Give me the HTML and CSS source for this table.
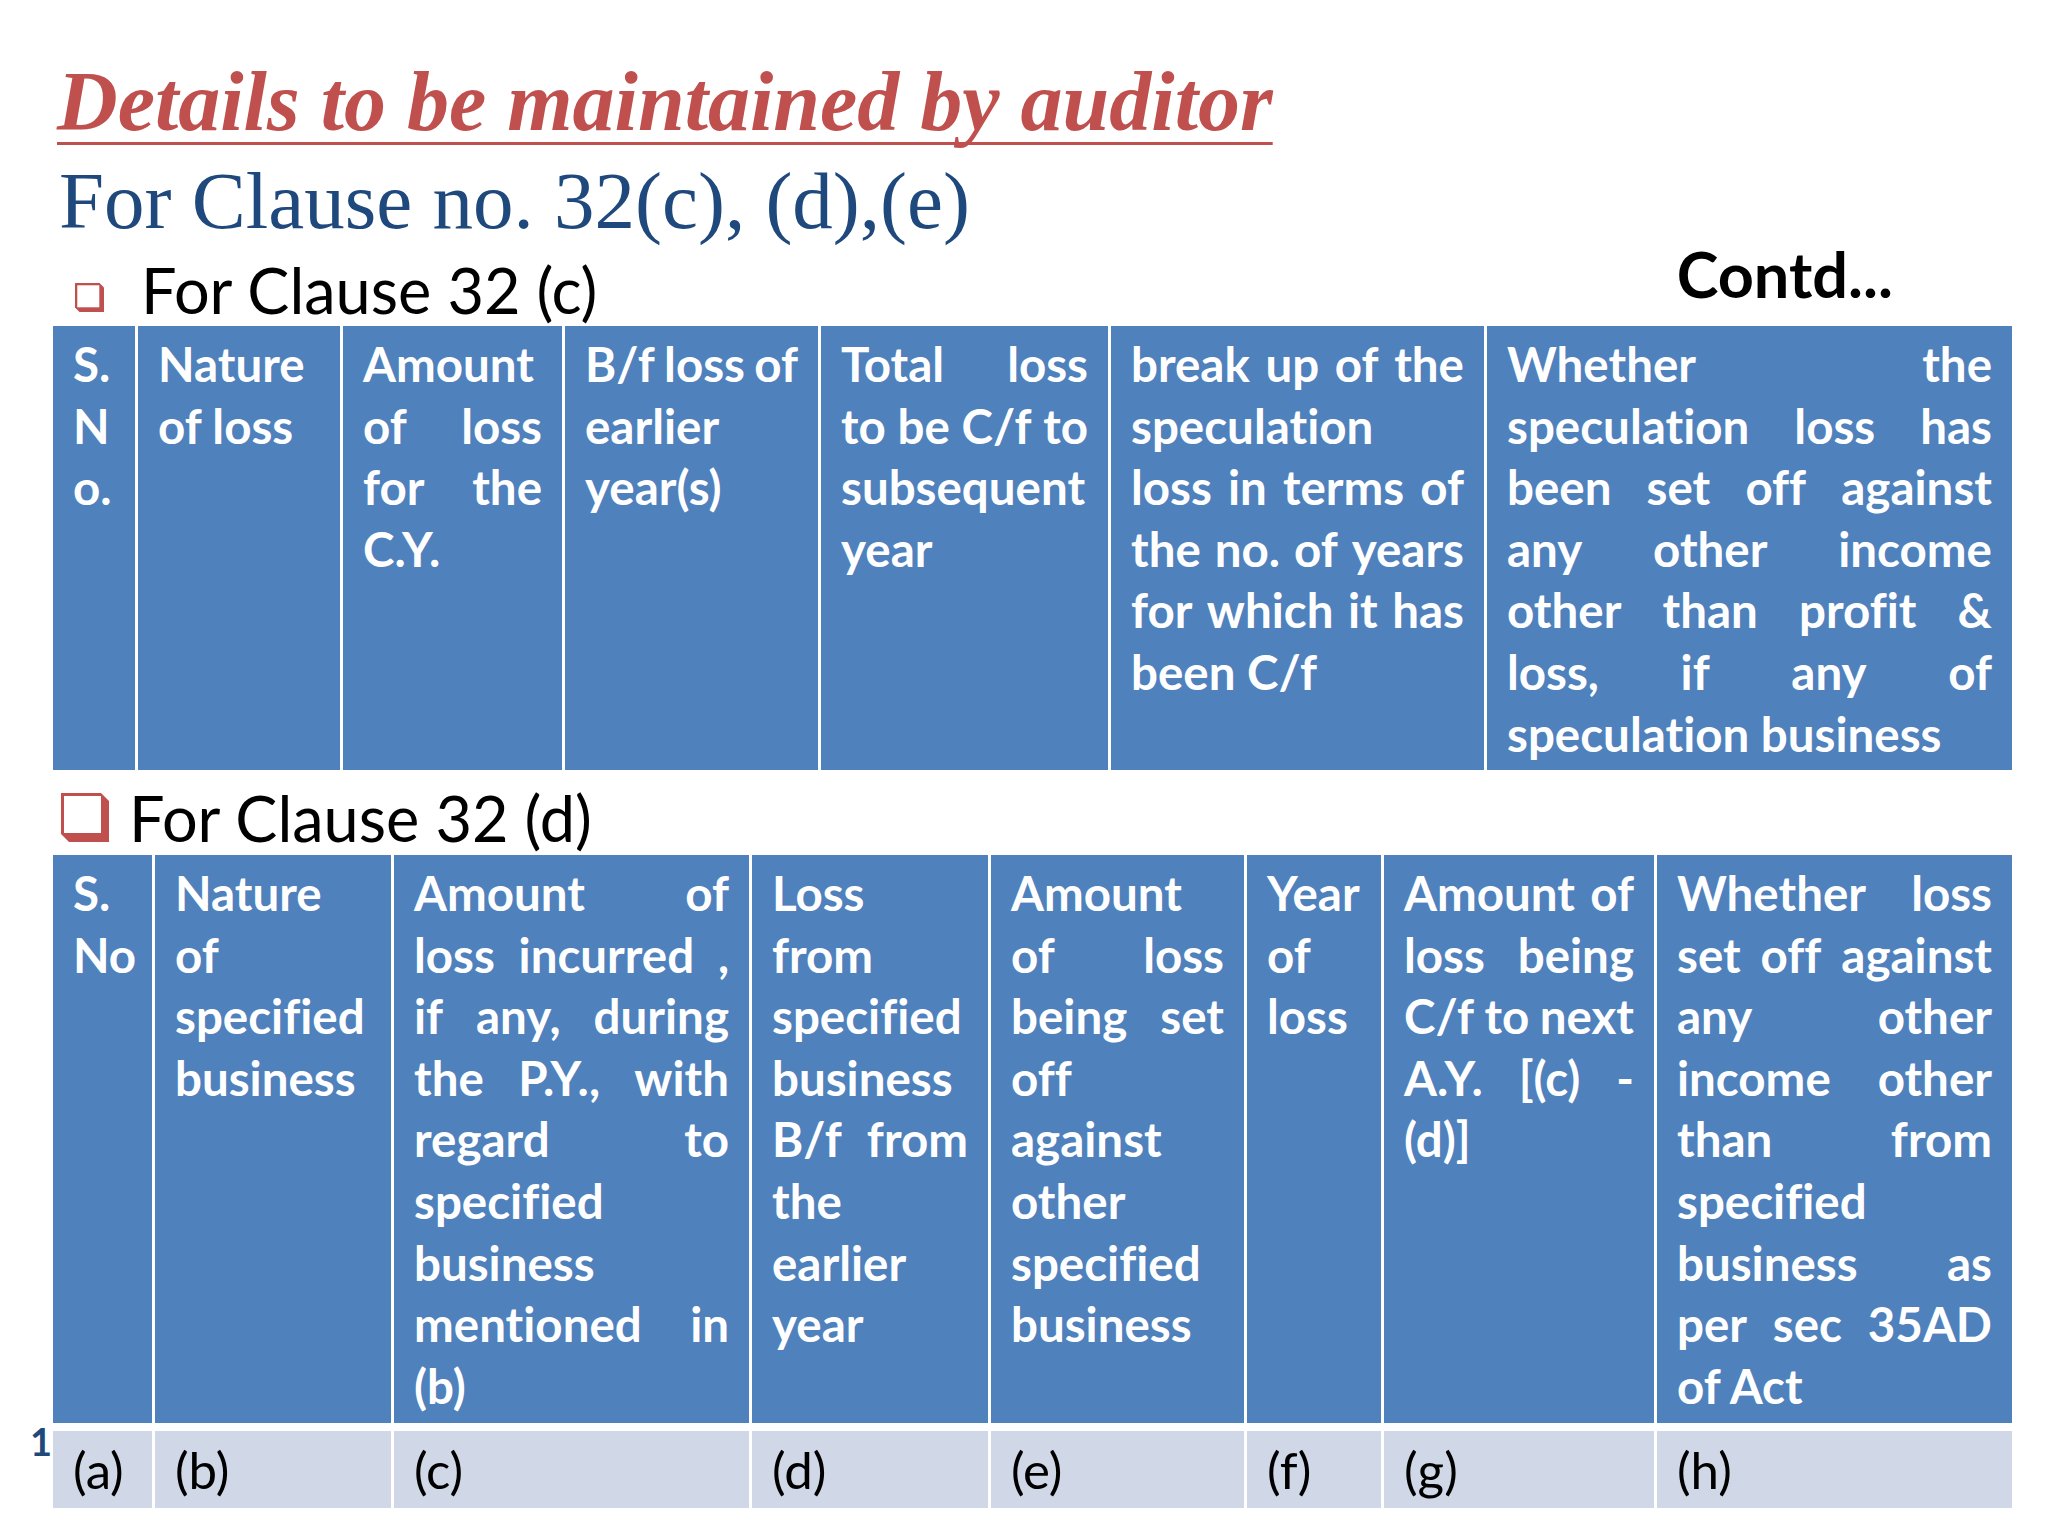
FILE: index.html
```html
<!DOCTYPE html>
<html lang="en">
<head>
<meta charset="utf-8">
<title>Details to be maintained by auditor</title>
<link rel="stylesheet" href="styles.css">
</head>
<body>
<div class="slide">
  <h1 class="title"><span>Details to be maintained by auditor</span></h1>
  <h2 class="subtitle">For Clause no. 32(c), (d),(e)</h2>

  <div class="clause-row">
    <svg class="bullet-s" viewBox="0 0 29 29" aria-hidden="true">
      <polygon points="0,0 24.5,0 29,4.5 29,29 4.5,29 0,24.5" fill="#C0504D"/>
      <rect x="2.3" y="2.3" width="22" height="22" fill="#fff"/>
    </svg>
    <div class="clause-text c-text">For Clause 32 (c)</div>
    <div class="contd">Contd...</div>
  </div>

  <div class="tbl tbl1">
    <div class="cell">
      <span class="ln">S.</span><span class="ln">N</span><span class="ln">o.</span>
    </div>
    <div class="cell">
      <span class="ln">Nature</span><span class="ln">of loss</span>
    </div>
    <div class="cell">
      <span class="ln">Amount</span>
      <span class="ln j"><span>of</span><span>loss</span></span>
      <span class="ln j"><span>for</span><span>the</span></span>
      <span class="ln">C.Y.</span>
    </div>
    <div class="cell">
      <span class="ln j"><span>B/f</span><span>loss</span><span>of</span></span>
      <span class="ln">earlier</span>
      <span class="ln">year(s)</span>
    </div>
    <div class="cell">
      <span class="ln j"><span>Total</span><span>loss</span></span>
      <span class="ln j"><span>to</span><span>be</span><span>C/f</span><span>to</span></span>
      <span class="ln">subsequent</span>
      <span class="ln">year</span>
    </div>
    <div class="cell">
      <span class="ln j"><span>break</span><span>up</span><span>of</span><span>the</span></span>
      <span class="ln">speculation</span>
      <span class="ln j"><span>loss</span><span>in</span><span>terms</span><span>of</span></span>
      <span class="ln j"><span>the</span><span>no.</span><span>of</span><span>years</span></span>
      <span class="ln j"><span>for</span><span>which</span><span>it</span><span>has</span></span>
      <span class="ln">been C/f</span>
    </div>
    <div class="cell">
      <span class="ln j"><span>Whether</span><span>the</span></span>
      <span class="ln j"><span>speculation</span><span>loss</span><span>has</span></span>
      <span class="ln j"><span>been</span><span>set</span><span>off</span><span>against</span></span>
      <span class="ln j"><span>any</span><span>other</span><span>income</span></span>
      <span class="ln j"><span>other</span><span>than</span><span>profit</span><span>&amp;</span></span>
      <span class="ln j"><span>loss,</span><span>if</span><span>any</span><span>of</span></span>
      <span class="ln">speculation business</span>
    </div>
  </div>

  <div class="clause-row clause-row-d">
    <svg class="bullet-l" viewBox="0 0 48 49" aria-hidden="true">
      <polygon points="0,0 40,0 48,8 48,49 8,49 0,41" fill="#C0504D"/>
      <rect x="3" y="3" width="37" height="37" fill="#fff"/>
    </svg>
    <div class="clause-text d-text">For Clause 32 (d)</div>
  </div>

  <div class="tbl tbl2">
    <div class="cell">
      <span class="ln">S.</span><span class="ln">No</span>
    </div>
    <div class="cell">
      <span class="ln">Nature</span><span class="ln">of</span><span class="ln">specified</span><span class="ln">business</span>
    </div>
    <div class="cell">
      <span class="ln j"><span>Amount</span><span>of</span></span>
      <span class="ln j"><span>loss</span><span>incurred</span><span>,</span></span>
      <span class="ln j"><span>if</span><span>any,</span><span>during</span></span>
      <span class="ln j"><span>the</span><span>P.Y.,</span><span>with</span></span>
      <span class="ln j"><span>regard</span><span>to</span></span>
      <span class="ln">specified</span>
      <span class="ln">business</span>
      <span class="ln j"><span>mentioned</span><span>in</span></span>
      <span class="ln">(b)</span>
    </div>
    <div class="cell">
      <span class="ln">Loss</span>
      <span class="ln">from</span>
      <span class="ln">specified</span>
      <span class="ln">business</span>
      <span class="ln j"><span>B/f</span><span>from</span></span>
      <span class="ln">the</span>
      <span class="ln">earlier</span>
      <span class="ln">year</span>
    </div>
    <div class="cell">
      <span class="ln">Amount</span>
      <span class="ln j"><span>of</span><span>loss</span></span>
      <span class="ln j"><span>being</span><span>set</span></span>
      <span class="ln">off</span>
      <span class="ln">against</span>
      <span class="ln">other</span>
      <span class="ln">specified</span>
      <span class="ln">business</span>
    </div>
    <div class="cell">
      <span class="ln">Year</span><span class="ln">of</span><span class="ln">loss</span>
    </div>
    <div class="cell">
      <span class="ln j"><span>Amount</span><span>of</span></span>
      <span class="ln j"><span>loss</span><span>being</span></span>
      <span class="ln j"><span>C/f</span><span>to</span><span>next</span></span>
      <span class="ln j"><span>A.Y.</span><span>[(c)</span><span>-</span></span>
      <span class="ln">(d)]</span>
    </div>
    <div class="cell">
      <span class="ln j"><span>Whether</span><span>loss</span></span>
      <span class="ln j"><span>set</span><span>off</span><span>against</span></span>
      <span class="ln j"><span>any</span><span>other</span></span>
      <span class="ln j"><span>income</span><span>other</span></span>
      <span class="ln j"><span>than</span><span>from</span></span>
      <span class="ln">specified</span>
      <span class="ln j"><span>business</span><span>as</span></span>
      <span class="ln j"><span>per</span><span>sec</span><span>35AD</span></span>
      <span class="ln">of Act</span>
    </div>

    <div class="dcell">(a)</div>
    <div class="dcell">(b)</div>
    <div class="dcell">(c)</div>
    <div class="dcell">(d)</div>
    <div class="dcell">(e)</div>
    <div class="dcell">(f)</div>
    <div class="dcell">(g)</div>
    <div class="dcell">(h)</div>
  </div>

  <div class="slide-num">1</div>
</div>
</body>
</html>
```

FILE: styles.css
```css
html, body {
  margin: 0;
  padding: 0;
  background: #ffffff;
}

.slide {
  position: relative;
  width: 2048px;
  height: 1536px;
  box-sizing: border-box;
  padding: 52px 36px 0 53px;
  font-family: Lato, "Liberation Sans", sans-serif;
  font-variant-ligatures: none;
  font-feature-settings: "liga" 0, "clig" 0, "dlig" 0;
  color: #000000;
  overflow: hidden;
}

.title {
  margin: 0 0 0 4px;
  height: 99px;
  font-family: "Liberation Serif", serif;
  font-style: italic;
  font-weight: bold;
  font-size: 84px;
  line-height: 99px;
  color: #C0504D;
  white-space: nowrap;
}

.title span {
  text-decoration: underline;
  text-decoration-thickness: 3px;
  text-underline-offset: 12px;
  text-decoration-skip-ink: none;
}

.subtitle {
  margin: 0 0 0 6px;
  height: 100px;
  font-family: "Liberation Serif", serif;
  font-weight: normal;
  font-size: 81px;
  line-height: 100px;
  color: #1F497D;
  white-space: nowrap;
}

.clause-row {
  display: flex;
  align-items: flex-start;
  height: 75px;
}

.clause-row-d {
  height: 85px;
}

.bullet-s {
  width: 29px;
  height: 29px;
  margin: 32px 0 0 22px;
  flex: none;
}

.bullet-l {
  width: 48px;
  height: 49px;
  margin: 23px 0 0 8px;
  flex: none;
}

.clause-text {
  font-size: 63px;
  line-height: 61px;
  white-space: nowrap;
}

.c-text {
  margin: 8px 0 0 37px;
}

.d-text {
  margin: 17px 0 0 20px;
}

.contd {
  margin: 0 119px 0 auto;
  font-weight: bold;
  font-size: 63px;
  line-height: 45px;
  white-space: nowrap;
}

.tbl {
  display: grid;
  column-gap: 3px;
}

.tbl1 {
  grid-template-columns: 82px 202px 219px 253px 287px 373px 525px;
  grid-template-rows: 444px;
}

.tbl2 {
  grid-template-columns: 99px 236px 355px 236px 253px 134px 270px 355px;
  grid-template-rows: 568px 77px;
  row-gap: 8px;
}

.cell {
  background: #4F81BD;
  color: #ffffff;
  font-weight: bold;
  font-size: 47.5px;
  line-height: 61.6px;
  padding: 7px 20px 0 20px;
  overflow: hidden;
}

.ln {
  display: block;
  white-space: nowrap;
}

.j {
  display: flex;
  justify-content: space-between;
}

.dcell {
  display: flex;
  align-items: center;
  background: #D0D8E8;
  color: #000000;
  font-size: 51px;
  padding: 0 20px;
  white-space: nowrap;
}

.slide-num {
  position: absolute;
  left: 30px;
  top: 1422px;
  font-weight: bold;
  font-size: 38px;
  line-height: 38px;
  color: #1F497D;
}
```
